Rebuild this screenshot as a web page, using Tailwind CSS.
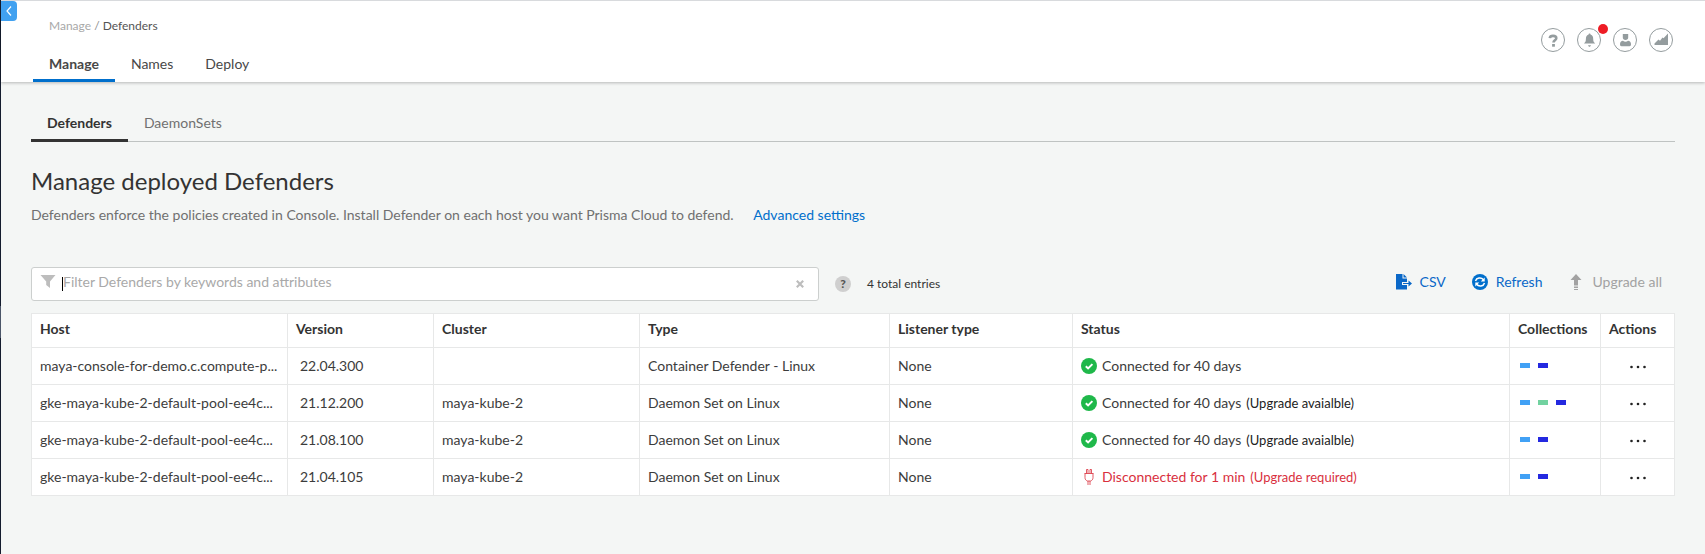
<!DOCTYPE html>
<html lang="en">
<head>
<meta charset="utf-8">
<meta name="viewport" content="width=device-width, initial-scale=1">
<title>Manage Defenders</title>
<script src="https://cdn.jsdelivr.net/npm/@tailwindcss/browser@4"></script>
</head>
<body class="relative flex min-h-screen bg-[#f4f6f5] font-['Lato',sans-serif] text-sm text-[#333333]">
<div class="w-px shrink-0 bg-[#141c2e] pt-[306px]"><div class="h-8 bg-[#4a5568]"></div></div>
<button type="button" aria-label="Collapse sidebar" class="absolute left-px top-px flex h-5 w-4 items-center justify-center rounded-r bg-[#41a1f0]">
  <svg class="h-3 w-2" viewBox="0 0 8 12" fill="none" stroke="#fff" stroke-width="1.2"><path d="M6 1.500 2 6l4 4.500"/></svg>
</button>
<div class="min-w-0 flex-1">
  <header class="flex items-start justify-between border-t border-[#d8dadd] bg-white pr-8 shadow-[0_1px_3px_rgba(0,0,0,0.25)]">
    <div class="pl-8 pt-[15px]">
      <nav aria-label="Breadcrumb" class="px-4 text-xs leading-5 text-[#a8a8a8]"><a href="#">Manage</a> <span class="text-[#8c8c8c]">/</span> <a href="#" class="text-[#555555]">Defenders</a></nav>
      <nav aria-label="Main" class="mt-[18px] flex leading-5 text-[#484848]">
        <a href="#" class="border-b-3 border-[#006fcc] px-4 pb-[5px] font-bold">Manage</a>
        <a href="#" class="px-4">Names</a>
        <a href="#" class="px-4">Deploy</a>
      </nav>
    </div>
    <div class="flex gap-3 pt-[27px] text-[#949c9e]">
      <button type="button" aria-label="Help"><svg class="size-6" viewBox="0 0 24 24"><circle cx="12" cy="12" r="11.500" fill="none" stroke="currentColor"/><path d="M8.800 10.200C9 8.100 10.300 7.900 12 7.900c2.200 0 3.300.9 3.300 2.300 0 2-2.800 2.100-2.800 4.200" fill="none" stroke="currentColor" stroke-width="2.600"/><path d="M11.100 16h2.800v2.700h-2.800z" fill="currentColor"/></svg></button>
      <button type="button" aria-label="Notifications" class="relative"><svg class="size-6" viewBox="0 0 24 24"><circle cx="12" cy="12" r="11.500" fill="none" stroke="currentColor"/><path d="M12.500 5.500c.7 0 1 .4 1 1 2.200.6 2.700 2.500 2.700 4.500 0 2.500.6 3.200 2 4.500H7c1.300-1.300 1.900-2 1.900-4.500 0-2 .6-3.900 2.700-4.500 0-.6.300-1 .9-1zM11 17.200h3c-.3.900-.8 1.500-1.500 1.500s-1.200-.6-1.500-1.500z" fill="currentColor"/></svg><span class="absolute -right-[7px] -top-1 size-[10px] rounded-full bg-[#ee1c25]"></span></button>
      <button type="button" aria-label="Account"><svg class="size-6" viewBox="0 0 24 24"><circle cx="12" cy="12" r="11.500" fill="none" stroke="currentColor"/><path d="M9.800 6h5.400v3.500c0 1.500-1 2.500-2.700 2.500S9.800 11 9.800 9.500zM7 16c0-2 1.200-3 3-3.200.6.700 1.500 1 2.500 1s1.900-.3 2.500-1c1.800.2 3 1.200 3 3.200 0 1.600-.4 2.200-1.500 2.200h-8C7.400 18.200 7 17.600 7 16z" fill="currentColor"/></svg></button>
      <button type="button" aria-label="Usage"><svg class="size-6" viewBox="0 0 24 24"><circle cx="12" cy="12" r="11.500" fill="none" stroke="currentColor"/><path d="M5.500 17v-1.500l4-4 1.500 1.200L13.500 9.500l1 .8L19 5.500V17z" fill="currentColor"/></svg></button>
    </div>
  </header>
  <main class="px-[30px] pt-[31px]">
    <nav aria-label="Views" class="flex border-b border-[#bfc3c2] leading-5 text-[#707070]">
      <a href="#" class="-mb-px border-b-3 border-[#333333] px-4 pb-[6px] font-bold text-[#333333]">Defenders</a>
      <a href="#" class="px-4">DaemonSets</a>
    </nav>
    <h1 class="mt-[23px] text-2xl leading-8">Manage deployed Defenders</h1>
    <p class="mt-2 leading-5 text-[#707070]">Defenders enforce the policies created in Console. Install Defender on each host you want Prisma Cloud to defend. <a href="#" class="ml-4 text-[#006fcc]">Advanced settings</a></p>
    <div class="mt-[42px] flex items-center">
      <div class="flex h-[34px] w-full max-w-[788px] items-center rounded-[3px] border border-[#cccfce] bg-white pl-2 pr-3">
        <svg class="mb-1 size-4 text-[#bdbdbd]" viewBox="0 0 16 16" fill="currentColor"><path d="M.5 1h15L10 7.500V14l-3.800-3V7.500z"/></svg>
        <span class="ml-[6px] h-[14px] w-px bg-black"></span>
        <input type="text" aria-label="Filter Defenders" placeholder="Filter Defenders by keywords and attributes" class="min-w-0 flex-1 pb-1 outline-none placeholder:text-[#a9a9a9]">
        <button type="button" aria-label="Clear filter" class="flex size-3 items-center justify-center"><svg class="size-2" viewBox="0 0 8 8" stroke="#bdbdbd" stroke-width="2.200"><path d="M.8.8l6.400 6.400M7.200.8.8 7.200"/></svg></button>
      </div>
      <button type="button" aria-label="Filter help" class="ml-4 flex size-4 shrink-0 items-center justify-center rounded-full bg-[#cfcfcf] text-xs font-black text-[#555555]">?</button>
      <span class="ml-4 whitespace-nowrap text-xs">4 total entries</span>
      <div class="ml-auto flex gap-[26px] whitespace-nowrap pb-1 pr-[13px] leading-5 text-[#0a68c8]">
        <button type="button" class="flex items-center gap-2"><svg class="size-4" viewBox="0 0 16 16" fill="currentColor"><path d="M0 0h6.500v4.500H11V8H6v3h5v4.500H0zM7.500 0 11 3.500H7.500zM7 9h5.500V6.500l3.500 3-3.500 3V10H7z"/></svg>CSV</button>
        <button type="button" class="flex items-center gap-2"><svg class="size-4" viewBox="0 0 16 16"><circle cx="8" cy="8" r="8" fill="#006fcc"/><path d="M3.500 7C4.500 3.600 9 3 11.500 5.700M12.500 9C11.500 12.400 7 13 4.500 10.300" fill="none" stroke="#fff" stroke-width="1.500"/><path d="M12.700 3.500v4H8.800zM3.300 12.500v-4h3.900z" fill="#fff"/></svg>Refresh</button>
        <button type="button" class="flex items-center gap-2 text-[#a2a2a2]" disabled><svg class="size-4" viewBox="0 0 16 16" fill="currentColor"><path d="M8 0l5.500 6H10v5.500H6V6H2.500zM6 12.500h4V14H6zM6 15h4v1H6z"/></svg>Upgrade all</button>
      </div>
    </div>
    <table class="mt-3 w-full table-fixed border-collapse bg-white text-left leading-5 text-[#3c3c3c] [&_td]:h-[37px] [&_td]:border [&_td]:border-[#e7e8e8] [&_td]:px-2 [&_td]:pb-px [&_th]:h-[34px] [&_th]:border [&_th]:border-[#e7e8e8] [&_th]:px-2 [&_th]:pb-1 [&_th]:font-bold [&_th]:text-[#333333]">
      <colgroup><col class="w-[256px]"><col class="w-[146px]"><col class="w-[206px]"><col class="w-[250px]"><col class="w-[183px]"><col><col class="w-[91px]"><col class="w-[74px]"></colgroup>
      <thead><tr><th>Host</th><th>Version</th><th>Cluster</th><th>Type</th><th>Listener type</th><th>Status</th><th>Collections</th><th>Actions</th></tr></thead>
      <tbody>
        <tr>
          <td class="whitespace-nowrap">maya-console-for-demo.c.compute-p...</td><td><span class="pl-1">22.04.300</span></td><td></td><td>Container Defender - Linux</td><td>None</td>
          <td><div class="flex items-center gap-[5px]"><svg class="size-4" viewBox="0 0 16 16"><circle cx="8" cy="8" r="8" fill="#1fb84a"/><path d="M4.800 8.200l2.300 2.200 4.300-4.300" fill="none" stroke="#fff" stroke-width="2"/></svg>Connected for 40 days</div></td>
          <td><div class="flex gap-2 pl-[2px]"><span class="h-[5px] w-[10px] bg-[#41a1f5]"></span><span class="h-[5px] w-[10px] bg-[#2429e0]"></span></div></td>
          <td class="text-center"><button type="button" aria-label="Actions" class="align-middle"><svg class="h-1 w-4" viewBox="0 0 16 4" fill="#222"><circle cx="1.500" cy="2" r="1.300"/><circle cx="8" cy="2" r="1.300"/><circle cx="14.500" cy="2" r="1.300"/></svg></button></td>
        </tr>
        <tr>
          <td class="whitespace-nowrap">gke-maya-kube-2-default-pool-ee4c...</td><td><span class="pl-1">21.12.200</span></td><td>maya-kube-2</td><td>Daemon Set on Linux</td><td>None</td>
          <td><div class="flex items-center gap-[5px]"><svg class="size-4" viewBox="0 0 16 16"><circle cx="8" cy="8" r="8" fill="#1fb84a"/><path d="M4.800 8.200l2.300 2.200 4.300-4.300" fill="none" stroke="#fff" stroke-width="2"/></svg>Connected for 40 days <span class="text-[13px] text-[#222222]">(Upgrade avaialble)</span></div></td>
          <td><div class="flex gap-2 pl-[2px]"><span class="h-[5px] w-[10px] bg-[#41a1f5]"></span><span class="h-[5px] w-[10px] bg-[#72d2a0]"></span><span class="h-[5px] w-[10px] bg-[#2429e0]"></span></div></td>
          <td class="text-center"><button type="button" aria-label="Actions" class="align-middle"><svg class="h-1 w-4" viewBox="0 0 16 4" fill="#222"><circle cx="1.500" cy="2" r="1.300"/><circle cx="8" cy="2" r="1.300"/><circle cx="14.500" cy="2" r="1.300"/></svg></button></td>
        </tr>
        <tr>
          <td class="whitespace-nowrap">gke-maya-kube-2-default-pool-ee4c...</td><td><span class="pl-1">21.08.100</span></td><td>maya-kube-2</td><td>Daemon Set on Linux</td><td>None</td>
          <td><div class="flex items-center gap-[5px]"><svg class="size-4" viewBox="0 0 16 16"><circle cx="8" cy="8" r="8" fill="#1fb84a"/><path d="M4.800 8.200l2.300 2.200 4.300-4.300" fill="none" stroke="#fff" stroke-width="2"/></svg>Connected for 40 days <span class="text-[13px] text-[#222222]">(Upgrade avaialble)</span></div></td>
          <td><div class="flex gap-2 pl-[2px]"><span class="h-[5px] w-[10px] bg-[#41a1f5]"></span><span class="h-[5px] w-[10px] bg-[#2429e0]"></span></div></td>
          <td class="text-center"><button type="button" aria-label="Actions" class="align-middle"><svg class="h-1 w-4" viewBox="0 0 16 4" fill="#222"><circle cx="1.500" cy="2" r="1.300"/><circle cx="8" cy="2" r="1.300"/><circle cx="14.500" cy="2" r="1.300"/></svg></button></td>
        </tr>
        <tr>
          <td class="whitespace-nowrap">gke-maya-kube-2-default-pool-ee4c...</td><td><span class="pl-1">21.04.105</span></td><td>maya-kube-2</td><td>Daemon Set on Linux</td><td>None</td>
          <td><div class="flex items-center gap-[5px] text-[#d9303e]"><svg class="size-4" viewBox="0 0 16 16" fill="none" stroke="currentColor" stroke-width=".8"><path d="M5.500 4.500V.5h1.500v4M9 4.500V.5h1.500v4M3.500 4.500h9M4 4.500v4c0 2 1 3 2.500 3.500h3c1.500-.5 2.500-1.500 2.500-3.500v-4M7 12v4M9 12v4"/></svg>Disconnected for 1 min <span class="text-[13px]">(Upgrade required)</span></div></td>
          <td><div class="flex gap-2 pl-[2px]"><span class="h-[5px] w-[10px] bg-[#41a1f5]"></span><span class="h-[5px] w-[10px] bg-[#2429e0]"></span></div></td>
          <td class="text-center"><button type="button" aria-label="Actions" class="align-middle"><svg class="h-1 w-4" viewBox="0 0 16 4" fill="#222"><circle cx="1.500" cy="2" r="1.300"/><circle cx="8" cy="2" r="1.300"/><circle cx="14.500" cy="2" r="1.300"/></svg></button></td>
        </tr>
      </tbody>
    </table>
  </main>
</div>
</body>
</html>
